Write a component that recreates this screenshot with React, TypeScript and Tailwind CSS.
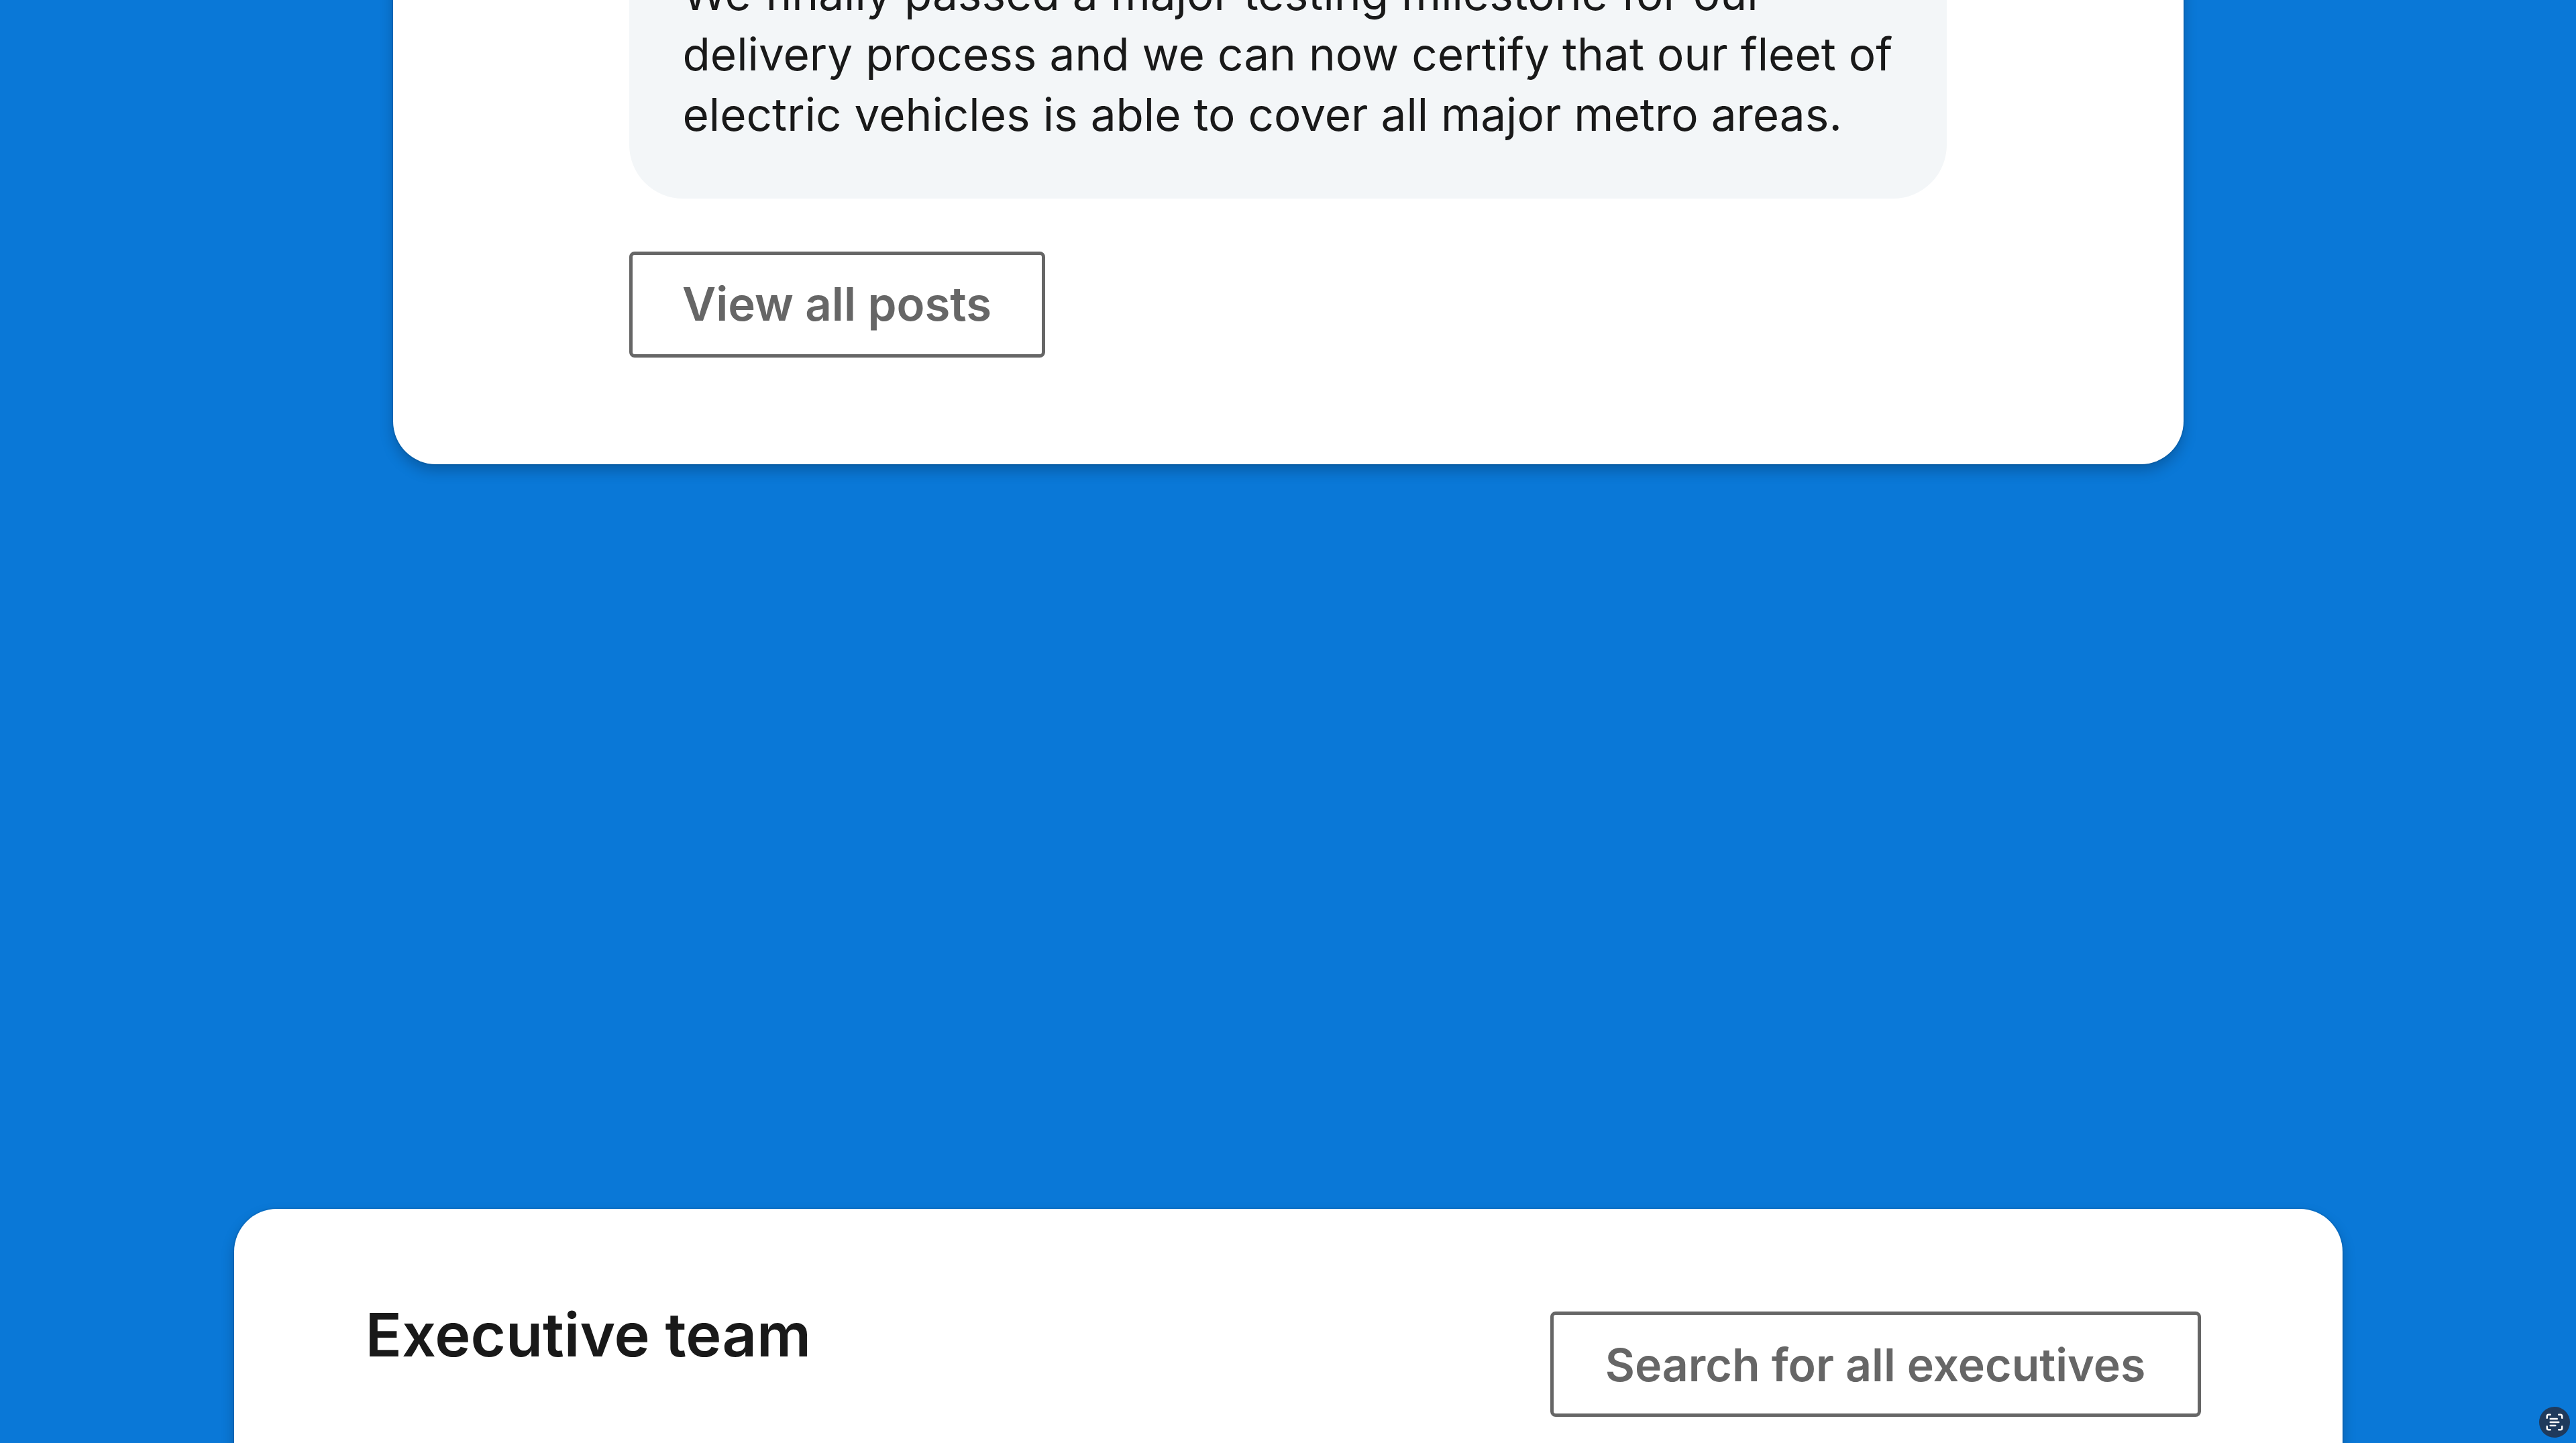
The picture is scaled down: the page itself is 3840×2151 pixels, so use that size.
import { ScanText } from "lucide-react"

export default function App() {
  return (
    <div className="relative h-[2151px] overflow-hidden bg-[#0a78d7] font-['Inter',sans-serif] text-[#191919]">
      {/* posts card, scrolled partly out of view */}
      <section className="mx-auto -mt-[54px] w-[2669px] rounded-b-[64px] bg-white pr-[353px] pb-[159px] pl-[352px] shadow-[0_0_0_2px_rgba(0,0,0,0.06),0_10px_20px_rgba(0,0,0,0.22)]">
        <div className="rounded-b-[80px] bg-[#f3f6f8] pr-[40px] pb-[80px] pl-[80px] text-[67.5px] leading-[90px]">
          <p>
            We finally passed a major testing milestone for our
            <br />
            delivery process and we can now certify that our fleet of
            <br />
            electric vehicles is able to cover all major metro areas.
          </p>
        </div>
        <button className="mt-[79px] flex h-[158px] w-[620px] items-center justify-center rounded-[8px] border-[5px] border-[#666666] text-[69px] font-semibold text-[#666666]">
          View all posts
        </button>
      </section>

      {/* executive team card */}
      <section className="mx-auto mt-[1110px] flex w-[3143px] items-start justify-between rounded-t-[64px] bg-white pt-[153px] pr-[211px] pb-[200px] pl-[196px] shadow-[0_0_0_2px_rgba(0,0,0,0.06),0_10px_20px_rgba(0,0,0,0.22)]">
        <h2 className="-mt-[25px] text-[90px] leading-[120px] font-semibold">Executive team</h2>
        <button className="flex h-[157px] w-[970px] items-center justify-center rounded-[8px] border-[5px] border-[#666666] text-[68px] font-semibold text-[#666666]">
          Search for all executives
        </button>
      </section>

      {/* floating capture button */}
      <div className="absolute top-[2097px] left-[3785px] flex h-[46px] w-[46px] items-center justify-center rounded-full bg-[#1f3a5c] text-white">
        <ScanText size={30} strokeWidth={2} />
      </div>
    </div>
  )
}
